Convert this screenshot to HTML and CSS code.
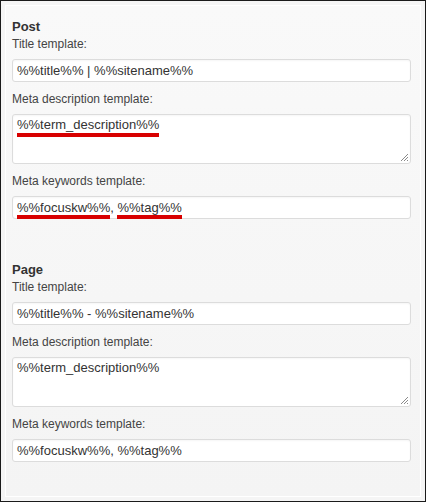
FILE: index.html
```html
<!DOCTYPE html>
<html lang="en">
<head>
    <meta charset="UTF-8">
    <meta name="viewport" content="width=device-width, initial-scale=1.0">
    <title>Titles &amp; Metas - Post Types</title>
    <link rel="stylesheet" href="styles.css">
</head>
<body>
    <div class="frame">
        <div class="panel">
            <div class="section">
                <h3>Post</h3>
                <label>Title template:</label>
                <div class="field">%%title%% | %%sitename%%</div>

                <label>Meta description template:</label>
                <div class="field area"><span class="mark">%%term_description%%</span>
                    <svg class="grip" width="9" height="9" viewBox="0 0 9 9">
                        <path d="M8 1 L1 8 M8 4 L4 8 M8 7 L7 8" stroke="#8a8a8a" stroke-width="1"/>
                    </svg>
                </div>

                <label>Meta keywords template:</label>
                <div class="field"><span class="mark low">%%focuskw%%</span>, <span class="mark low">%%tag%%</span></div>
            </div>

            <div class="section">
                <h3>Page</h3>
                <label>Title template:</label>
                <div class="field">%%title%% - %%sitename%%</div>

                <label>Meta description template:</label>
                <div class="field area">%%term_description%%
                    <svg class="grip" width="9" height="9" viewBox="0 0 9 9">
                        <path d="M8 1 L1 8 M8 4 L4 8 M8 7 L7 8" stroke="#8a8a8a" stroke-width="1"/>
                    </svg>
                </div>

                <label>Meta keywords template:</label>
                <div class="field">%%focuskw%%, %%tag%%</div>
            </div>
        </div>
    </div>
</body>
</html>
```

FILE: styles.css
```css
body {
    margin: 0;
    padding: 0;
    font-family: "Liberation Sans", Arial, sans-serif;
    background-color: #f5f5f5;
}

.frame {
    width: 426px;
    height: 502px;
    box-sizing: border-box;
    border: 1px solid #1a1a1a;
    padding: 4px;
    background-color: #f5f5f5;
}

.panel {
    height: 100%;
    box-sizing: border-box;
    border: 1px solid #ffffff;
    padding: 12px 9px 0 6px;
    background: linear-gradient(#f9f9f9, #f4f4f4);
}

.section + .section {
    margin-top: 42px;
}

h3 {
    margin: 0;
    font-size: 13px;
    line-height: 17px;
    font-weight: bold;
    color: #333;
}

label {
    display: block;
    font-size: 12px;
    line-height: 18px;
    color: #444;
    margin-bottom: 6px;
}

.field {
    position: relative;
    height: 23px;
    box-sizing: border-box;
    border: 1px solid #dcdcdc;
    border-radius: 3px;
    background-color: #fff;
    box-shadow: inset 0 1px 2px rgba(0, 0, 0, 0.04);
    padding: 0 4px;
    font-size: 13px;
    line-height: 21px;
    color: #333;
    margin-bottom: 8px;
}

.area {
    height: 50px;
    line-height: 16px;
    padding-top: 2px;
}

.mark {
    border-bottom: 4px solid #d80000;
    padding-bottom: 1px;
}

.mark.low {
    padding-bottom: 0;
}

.grip {
    position: absolute;
    right: 1px;
    bottom: 1px;
}
```
